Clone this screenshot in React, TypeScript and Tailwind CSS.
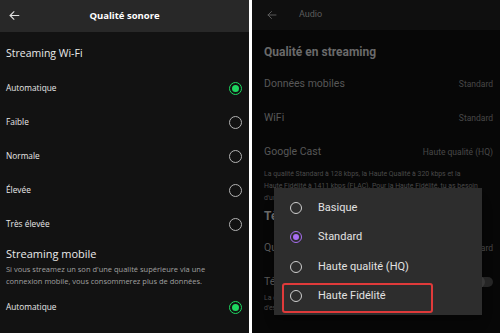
import React from 'react';

const BackArrow = ({ className }: { className: string }) => (
  <svg viewBox="0 0 24 24" className={className} fill="none" stroke="currentColor" strokeWidth={2} strokeLinecap="round" strokeLinejoin="round">
    <path d="M20 12H4" />
    <path d="M11 5l-7 7 7 7" />
  </svg>
);

// radio spotify (cercle vert ou gris)
function SpotRadio({ on }: { on?: boolean }) {
  if (on) {
    return (
      <span className="flex h-[13px] w-[13px] items-center justify-center rounded-full border-[1.5px] border-[#1ed760]">
        <span className="h-[7px] w-[7px] rounded-full bg-[#1ed760]" />
      </span>
    );
  }
  return <span className="block h-[13px] w-[13px] rounded-full border-[1.5px] border-[#b3b3b3]" />;
}

function QualityRow({ label, on }: { label: string; on?: boolean }) {
  return (
    <div className="flex h-[34px] items-center justify-between pl-[6px] pr-[7px]">
      <span className="text-[8.3px] font-medium text-[#e8e8e8]">{label}</span>
      <SpotRadio on={on} />
    </div>
  );
}

function SpotifyPanel() {
  return (
    <div className="flex h-full w-[249px] flex-col bg-[#121212]" style={{ fontFamily: '"Open Sans", "Noto Sans", sans-serif' }}>
      <header className="relative flex h-[32px] items-center justify-center bg-[#282828]">
        <BackArrow className="absolute left-[8px] top-[9px] h-[13px] w-[13px] text-[#e0e0e0]" />
        <span className="text-[9.5px] font-bold text-white">Qualité sonore</span>
      </header>
      <div className="mt-[12px] flex h-[20px] items-center pl-[6px] text-[10.5px] text-[#eaeaea]">Streaming Wi-Fi</div>
      <div className="mt-[7px]">
        <QualityRow label="Automatique" on />
        <QualityRow label="Faible" />
        <QualityRow label="Normale" />
        <QualityRow label="Élevée" />
        <QualityRow label="Très élevée" />
      </div>
      <div className="mt-[4px] flex h-[18px] items-center pl-[6px] text-[11px] text-[#eaeaea]">Streaming mobile</div>
      <p className="pl-[6px] pr-[4px] text-[7.5px] leading-[12px] text-[#a0a0a0]">
        Si vous streamez un son d'une qualité supérieure via une
        <br />
        connexion mobile, vous consommerez plus de données.
      </p>
      <div className="mt-[3px]">
        <QualityRow label="Automatique" on />
      </div>
    </div>
  );
}

function DeezerRow({ label, value }: { label: string; value: string }) {
  return (
    <div className="flex h-[34px] items-center justify-between px-[12px] pr-[7px]">
      <span className="text-[10.5px] text-[#575757]">{label}</span>
      <span className="text-[8.5px] text-[#474747]">{value}</span>
    </div>
  );
}

const options = ['Basique', 'Standard', 'Haute qualité (HQ)', 'Haute Fidélité'];

function DeezerPanel() {
  return (
    <div className="relative flex h-full flex-1 flex-col bg-[#070707]" style={{ fontFamily: 'Roboto, "Liberation Sans", sans-serif' }}>
      <header className="flex h-[30px] items-center bg-[#0f0f0f]">
        <BackArrow className="ml-[14px] h-[12px] w-[12px] text-[#5a5a5a]" />
        <span className="ml-[21px] text-[9px] text-[#5c5c5c]">Audio</span>
      </header>
      <div className="mt-[12px] flex h-[20px] items-center px-[12px] text-[12px] font-bold text-[#6a6a6a]">Qualité en streaming</div>
      <div className="mt-[5px]">
        <DeezerRow label="Données mobiles" value="Standard" />
        <DeezerRow label="WiFi" value="Standard" />
        <DeezerRow label="Google Cast" value="Haute qualité (HQ)" />
      </div>
      <p className="mt-[-1px] px-[12px] pr-[4px] text-[6.9px] leading-[12px] text-[#4a4a4a]">
        La qualité Standard à 128 kbps, la Haute Qualité à 320 kbps et la
        <br />
        Haute Fidélité à 1411 kbps (FLAC). Pour la Haute Fidélité, tu as besoin
        <br />
        d'un abonnement compatible.
      </p>
      <div className="mt-[2px] flex h-[20px] items-center px-[12px] text-[12px] font-bold text-[#6a6a6a]">Téléchargements</div>
      <div className="mt-[5px]">
        <DeezerRow label="Qualité de téléchargement" value="Standard" />
        <div className="flex h-[34px] items-center justify-between px-[12px] pr-[7px]">
          <span className="text-[10.5px] text-[#575757]">Télécharger via données mobiles</span>
          <span className="flex h-[10px] w-[20px] items-center rounded-full bg-[#262626]">
            <span className="h-[12px] w-[12px] rounded-full bg-[#3a3a3a]" />
          </span>
        </div>
      </div>
      <p className="mt-[-6px] px-[12px] text-[6.9px] leading-[10px] text-[#4a4a4a]">
        La qualité des téléchargements dépend
        <br />
        d'espace disponible sur ton appareil.
      </p>

      <div className="absolute left-[22px] top-[188px] h-[127px] w-[208px] bg-[#2d2d2d] pt-[5px] shadow-lg">
        {options.map((o, i) => (
          <div key={o} className="relative flex h-[29.5px] items-center">
            <span
              className={
                i === 1
                  ? 'ml-[16px] flex h-[12px] w-[12px] items-center justify-center rounded-full border-[1.5px] border-[#a86ef2]'
                  : 'ml-[16px] flex h-[12px] w-[12px] items-center justify-center rounded-full border-[1.5px] border-[#cfcfcf]'
              }
            >
              {i === 1 && <span className="h-[6px] w-[6px] rounded-full bg-[#a86ef2]" />}
            </span>
            <span className="ml-[16px] text-[11px] text-[#e2e2e2]">{o}</span>
            {i === 3 && (
              <span className="absolute left-[8px] top-[1px] h-[30px] w-[151px] rounded-[3px] border-2 border-[#df3a3a]" />
            )}
          </div>
        ))}
      </div>
    </div>
  );
}

export default function App() {
  return (
    <div className="flex h-[333px] w-[500px] overflow-hidden bg-white">
      <SpotifyPanel />
      <div className="w-[3px] bg-white" />
      <DeezerPanel />
    </div>
  );
}
